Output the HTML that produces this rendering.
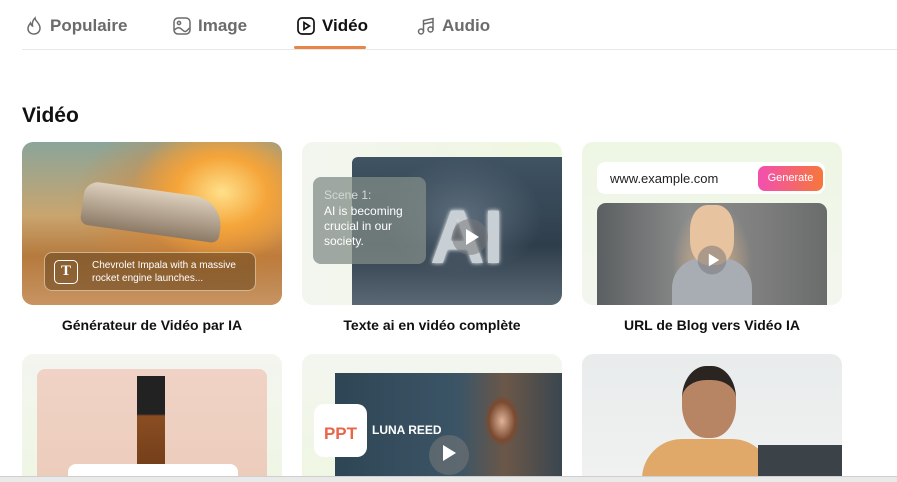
<!DOCTYPE html>
<html style="width:897px;height:482px;overflow:hidden"><head><meta charset="utf-8"><style>
*{margin:0;padding:0;box-sizing:border-box}
body{width:897px;height:482px;overflow:hidden;background:#fff;font-family:"Liberation Sans",sans-serif;position:relative}
.tabs{position:absolute;left:22px;top:0;width:875px;height:50px;border-bottom:1px solid #e8e8e8}
.tab{position:absolute;top:16px;display:flex;align-items:center;gap:6px;font-size:17px;font-weight:bold;color:#6b6b6b}
.tab svg{width:20px;height:20px}
.active{color:#111}
.ul{position:absolute;left:294px;top:46px;width:72px;height:3px;background:#e8864a;border-radius:2px}
h2{position:absolute;left:22px;top:104px;font-size:21px;font-weight:bold;color:#111}
.card{position:absolute;width:260px;height:163px;border-radius:11px;overflow:hidden}
.cap{position:absolute;width:260px;text-align:center;font-size:14px;font-weight:bold;color:#111}
.play{position:absolute;width:36px;height:36px;border-radius:50%;background:rgba(120,120,120,.55)}
.play:after{content:"";position:absolute;left:14px;top:10px;border-left:13px solid #fff;border-top:8px solid transparent;border-bottom:8px solid transparent}
</style></head><body>
<div class="tabs">
 <div class="tab" style="left:2px"><svg viewBox="0 0 20 20" fill="none" stroke="#6b6b6b" stroke-width="1.5"><path d="M10 18c-4 0-6-2.5-6-5.5 0-2.5 1.5-4 2.5-5.5.3 1.5 1 2.5 2 3C8 7 9 4 11 2c0 3 5 5 5 10 0 3.5-2.5 6-6 6z"/></svg>Populaire</div>
 <div class="tab" style="left:150px"><svg viewBox="0 0 20 20" fill="none" stroke="#6b6b6b" stroke-width="1.5"><rect x="2" y="2" width="16" height="16" rx="4"/><circle cx="7" cy="7" r="1.6"/><path d="M2.5 14c3-3 5-3 8 0s4 1 7-2"/></svg>Image</div>
 <div class="tab active" style="left:274px"><svg viewBox="0 0 20 20" fill="none" stroke="#111" stroke-width="1.7"><rect x="2" y="2" width="16" height="16" rx="4"/><path d="M8 6.5v7l5.5-3.5z"/></svg>Vidéo</div>
 <div class="tab" style="left:394px"><svg viewBox="0 0 20 20" fill="none" stroke="#6b6b6b" stroke-width="1.5"><circle cx="5" cy="15.5" r="2.5"/><circle cx="14.5" cy="13.5" r="2.5"/><path d="M7.5 15.5V4.5l9.5-2v11M7.5 8l9.5-2"/></svg>Audio</div>
</div>
<div class="ul"></div>
<h2>Vidéo</h2>

<div class="card" style="left:22px;top:142px;background:radial-gradient(ellipse 90px 70px at 200px 50px,#ffe08a,#f5a53a 50%,transparent 100%),radial-gradient(ellipse 140px 90px at 190px 60px,#d9822f,transparent),linear-gradient(180deg,#8aa59a 0%,#c9a56f 45%,#b57a3e 70%,#c89462 100%)">
 <div style="position:absolute;left:60px;top:48px;width:140px;height:44px;background:linear-gradient(#ddd0bd,#8c7a66);border-radius:14px 30px 8px 8px;transform:rotate(8deg)"></div>
 <div style="position:absolute;left:22px;top:110px;width:212px;height:39px;border-radius:8px;background:rgba(110,75,35,.6);border:1px solid rgba(255,235,200,.6)"></div>
 <div style="position:absolute;left:32px;top:118px;width:24px;height:24px;border:1.5px solid #fff;border-radius:5px;color:#fff;font:bold 15px 'Liberation Serif',serif;text-align:center;line-height:21px">T</div>
 <div style="position:absolute;left:70px;top:117px;color:#fff;font-size:10px;line-height:13px">Chevrolet Impala with a massive<br>rocket engine launches...</div>
</div>
<div class="cap" style="left:22px;top:317px">Générateur de Vidéo par IA</div>

<div class="card" style="left:302px;top:142px;background:linear-gradient(90deg,#f3f6ef,#eef7e0)">
 <div style="position:absolute;left:50px;top:15px;width:210px;height:148px;background:radial-gradient(ellipse 80px 60px at 110px 60px,#5d6d7c,transparent),linear-gradient(180deg,#3f5363,#2f3e4b 60%,#5a6874 100%);border-radius:6px 0 0 0"></div>
 <div style="position:absolute;left:128px;top:52px;color:#c8d0d6;font:bold 76px 'Liberation Sans',sans-serif;letter-spacing:-2px;text-shadow:0 0 4px #fff">AI</div>
 <div class="play" style="left:150px;top:77px"></div>
 <div style="position:absolute;left:11px;top:35px;width:113px;height:87px;border-radius:8px;background:rgba(130,140,135,.75)"></div>
 <div style="position:absolute;left:22px;top:46px;color:#d4d9d6;font-size:12px">Scene 1:</div>
 <div style="position:absolute;left:22px;top:62px;color:#fff;font-size:12px;line-height:15px">AI is becoming<br>crucial in our<br>society.</div>
</div>
<div class="cap" style="left:302px;top:317px">Texte ai en vidéo complète</div>

<div class="card" style="left:582px;top:142px;background:linear-gradient(180deg,#eef6e4,#f3f6ee)">
 <div style="position:absolute;left:15px;top:20px;width:228px;height:32px;background:#fff;border-radius:8px"></div>
 <div style="position:absolute;left:28px;top:29px;font-size:13px;color:#222">www.example.com</div>
 <div style="position:absolute;left:176px;top:24px;width:65px;height:25px;border-radius:7px;background:linear-gradient(90deg,#f24fb0,#f6773a);color:#fff;font-size:11px;text-align:center;line-height:25px">Generate</div>
 <div style="position:absolute;left:15px;top:61px;width:230px;height:102px;border-radius:9px 9px 0 0;background:radial-gradient(ellipse 40px 60px at 115px 60px,#d9b08a,transparent),linear-gradient(90deg,#5c5f61,#8b8d8c 40%,#7e7f7e 70%,#6a6c6c)">
  <div style="position:absolute;left:75px;top:55px;width:80px;height:50px;background:#a8adb3;border-radius:30px 30px 0 0"></div>
  <div style="position:absolute;left:93px;top:2px;width:44px;height:60px;background:#e8c3a0;border-radius:40%"></div>
 </div>
 <div class="play" style="left:112px;top:100px;transform:scale(.8)"></div>
</div>
<div class="cap" style="left:582px;top:317px">URL de Blog vers Vidéo IA</div>

<div class="card" style="left:22px;top:354px;background:linear-gradient(180deg,#f3f5ef,#eef7e2)">
 <div style="position:absolute;left:15px;top:15px;width:230px;height:150px;border-radius:8px;background:linear-gradient(180deg,#f0d3c6,#ebcab8)"></div>
 <div style="position:absolute;left:115px;top:22px;width:28px;height:100px;background:linear-gradient(#222 0,#222 38%,#8a4d22 40%,#6f3c18)"></div>
 <div style="position:absolute;left:46px;top:110px;width:170px;height:20px;background:#fff;border-radius:8px"></div>
</div>
<div class="card" style="left:302px;top:354px;background:linear-gradient(180deg,#f3f6ef,#eef7e0)">
 <div style="position:absolute;left:33px;top:19px;width:227px;height:110px;background:linear-gradient(90deg,#2e4555,#3c5566 55%,#6b5748 75%,#3a4650)"></div>
 <div style="position:absolute;left:165px;top:22px;width:70px;height:110px;background:radial-gradient(ellipse 22px 32px at 35px 45px,#e0b49a,#7a4a30 60%,transparent 80%)"></div>
 <div style="position:absolute;left:70px;top:69px;color:#fff;font-size:12px;font-weight:bold">LUNA REED</div>
 <div style="position:absolute;left:12px;top:50px;width:53px;height:53px;background:#fff;border-radius:10px;color:#e8654a;font-size:17px;font-weight:bold;text-align:center;line-height:60px">PPT</div>
 <div class="play" style="left:127px;top:81px;width:40px;height:40px"></div>
</div>
<div class="card" style="left:582px;top:354px;background:linear-gradient(180deg,#e9ecec,#f2f3f2)">
 <div style="position:absolute;left:100px;top:12px;width:54px;height:72px;background:#b88564;border-radius:45%;border-top:14px solid #2b2522"></div>
 <div style="position:absolute;left:60px;top:85px;width:130px;height:50px;background:#e0a96a;border-radius:40px 40px 0 0"></div>
 <div style="position:absolute;left:176px;top:91px;width:84px;height:40px;background:#3b4248"></div>
</div>
<div style="position:absolute;left:0;top:476px;width:897px;height:6px;background:#e9e9e9;border-top:1px solid #cfcfcf"></div>
</body></html>
